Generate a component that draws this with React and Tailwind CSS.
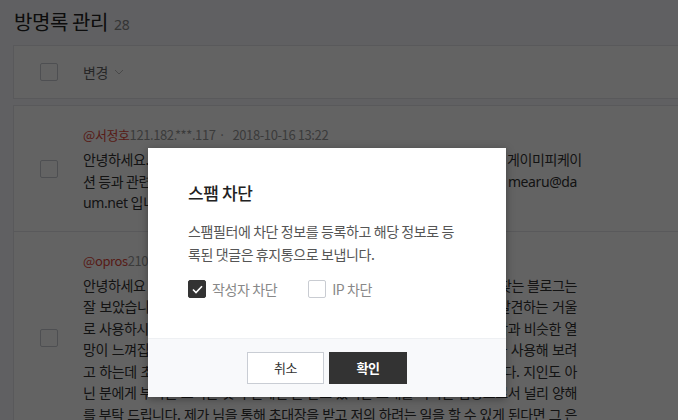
import React from "react";

const font = { fontFamily: '"Noto Sans CJK KR", "Noto Sans", sans-serif' };
const latin = { fontFamily: '"Noto Sans", "Noto Sans CJK KR", sans-serif' };

function Box({ checked = false, className = "" }) {
  return (
    <span
      className={
        "inline-flex h-[18px] w-[18px] shrink-0 items-center justify-center rounded-[2px] border " +
        (checked ? "border-[#333] bg-[#333] " : "border-[#c9ccd2] bg-white ") +
        className
      }
    >
      {checked && (
        <svg width="11" height="9" viewBox="0 0 11 9" fill="none">
          <path d="M1 4.5 4 7.5 10 1.2" stroke="#fff" strokeWidth="1.6" />
        </svg>
      )}
    </span>
  );
}

function Line({ children, last }) {
  return (
    <div
      className={
        "whitespace-nowrap " +
        (last ? "" : "text-justify [text-align-last:justify]")
      }
    >
      {children}
    </div>
  );
}

const first = [
  "안녕하세요. 우연히 티스토리 블로그 잘 보고 갑니다. 저는 주로 서비스 기획과 게이미피케이",
  <>
    션 등과 관련된 일을 하고 있습니다. 블로그 초대장을 부탁드립니다. 제 메일은{" "}
    <span style={latin}>mearu@da</span>
  </>,
  <>
    <span style={latin}>um.net</span> 입니다.
  </>,
];

const second = [
  "안녕하세요 오래전부터 눈여겨보던 곳입니다. 제가 평소 티스토리에서 즐겨 찾는 블로그는",
  "잘 보았습니다. 세상을 바라보는 시선으로 매일 새롭게 스스로를 돌아보고 발견하는 거울",
  "로 사용하시는 모습이 인상 깊었습니다. 저 그런 블로그를 꿈꾸기에 저의 생각과 비슷한 열",
  "망이 느껴집니다. 저도 이번 기회에 티스토리 블로그를 새롭게 시작하여 제가 사용해 보려",
  "고 하는데 초대장이 없어서 혹시나 이렇게 조심스럽게 글을 남기게 되었습니다. 지인도 아",
  "닌 분에게 부탁을 드리는 것이 실례인 줄 알고 있지만 초대를 바라는 입장으로서 널리 양해",
  "를 부탁 드립니다. 제가 님을 통해 초대장을 받고 저의 하려는 일을 할 수 있게 된다면 그 은",
];

function Item({ name, meta, lines, last }) {
  return (
    <div
      className={
        "flex items-center border-[#e4e6ea] pb-[17px] pt-[19px] " +
        (last ? "" : "border-b")
      }
    >
      <div className="flex w-[69px] justify-center pl-[1px]">
        <Box />
      </div>
      <div className="w-[494px]">
        <div className="mb-[4px] text-[13px] leading-[20px] text-[#999]">
          <span className="text-[#e0483c]">{name}</span>
          {meta}
        </div>
        <div className="text-[14px] leading-[21.5px] text-[#333]">
          {lines.map((l, i) => (
            <Line key={i} last={i === lines.length - 1 && lines.length < 4}>
              {l}
            </Line>
          ))}
        </div>
      </div>
    </div>
  );
}

export default function App() {
  return (
    <div
      className="relative h-[420px] w-[678px] overflow-hidden bg-[#f6f8fc] tracking-[-0.025em]"
      style={font}
    >
      <div className="pl-[13px]">
        <div className="flex items-baseline gap-[6px] pl-[1px] pt-[8px]">
          <h1 className="text-[20px] leading-[28px] text-[#222]">방명록 관리</h1>
          <span className="text-[14px] text-[#888]" style={latin}>
            28
          </span>
        </div>

        <div className="mt-[9px] flex h-[54px] w-[720px] items-center border border-[#e4e6ea] bg-white">
          <div className="flex w-[69px] justify-center pl-[1px]">
            <Box />
          </div>
          <div className="flex items-center gap-[6px] text-[14px] text-[#666]">
            변경
            <svg width="10" height="6" viewBox="0 0 10 6" fill="none">
              <path d="M1 1l4 4 4-4" stroke="#bbb" strokeWidth="1" />
            </svg>
          </div>
        </div>

        <div className="mt-[6px] w-[720px] border border-[#e4e6ea] bg-white">
          <Item
            name="@서정호"
            meta={
              <>
                121.182.***.117
                <span className="ml-[3px] mr-[7px]">·</span>
                2018-10-16 13:22
              </>
            }
            lines={first}
          />
          <Item
            name="@opros"
            meta={
              <>
                210.94.***.52
                <span className="ml-[3px] mr-[7px]">·</span>
                2018-10-15 09:41
              </>
            }
            lines={second}
            last
          />
        </div>
      </div>

      <div className="absolute inset-0 bg-black/[0.61]" />

      <div className="absolute left-[148px] top-[148px] w-[358px] bg-white shadow-[0_2px_8px_rgba(0,0,0,0.35)]">
        <div className="px-[40px] pb-[40px] pt-[33px]">
          <h2 className="text-[17px] font-medium leading-[24px] text-[#222]">
            스팸 차단
          </h2>
          <p className="mt-[15px] text-[14px] leading-[23px] text-[#555]">
            스팸필터에 차단 정보를 등록하고 해당 정보로 등
            <br />
            록된 댓글은 휴지통으로 보냅니다.
          </p>
          <div className="mt-[14px] flex items-center text-[14px] leading-[18px] text-[#888]">
            <Box checked />
            <span className="ml-[6px]">작성자 차단</span>
            <Box className="ml-[31px]" />
            <span className="ml-[6px]">IP 차단</span>
          </div>
        </div>
        <div className="flex h-[59px] items-center justify-center gap-[5px] border-t border-[#eef0f3] bg-[#f8f9fb]">
          <button className="h-[32px] w-[77px] border border-[#c9cdd4] bg-white text-[13px] text-[#333]">
            취소
          </button>
          <button className="h-[32px] w-[78px] bg-[#333] text-[13px] font-bold text-white">
            확인
          </button>
        </div>
      </div>
    </div>
  );
}
